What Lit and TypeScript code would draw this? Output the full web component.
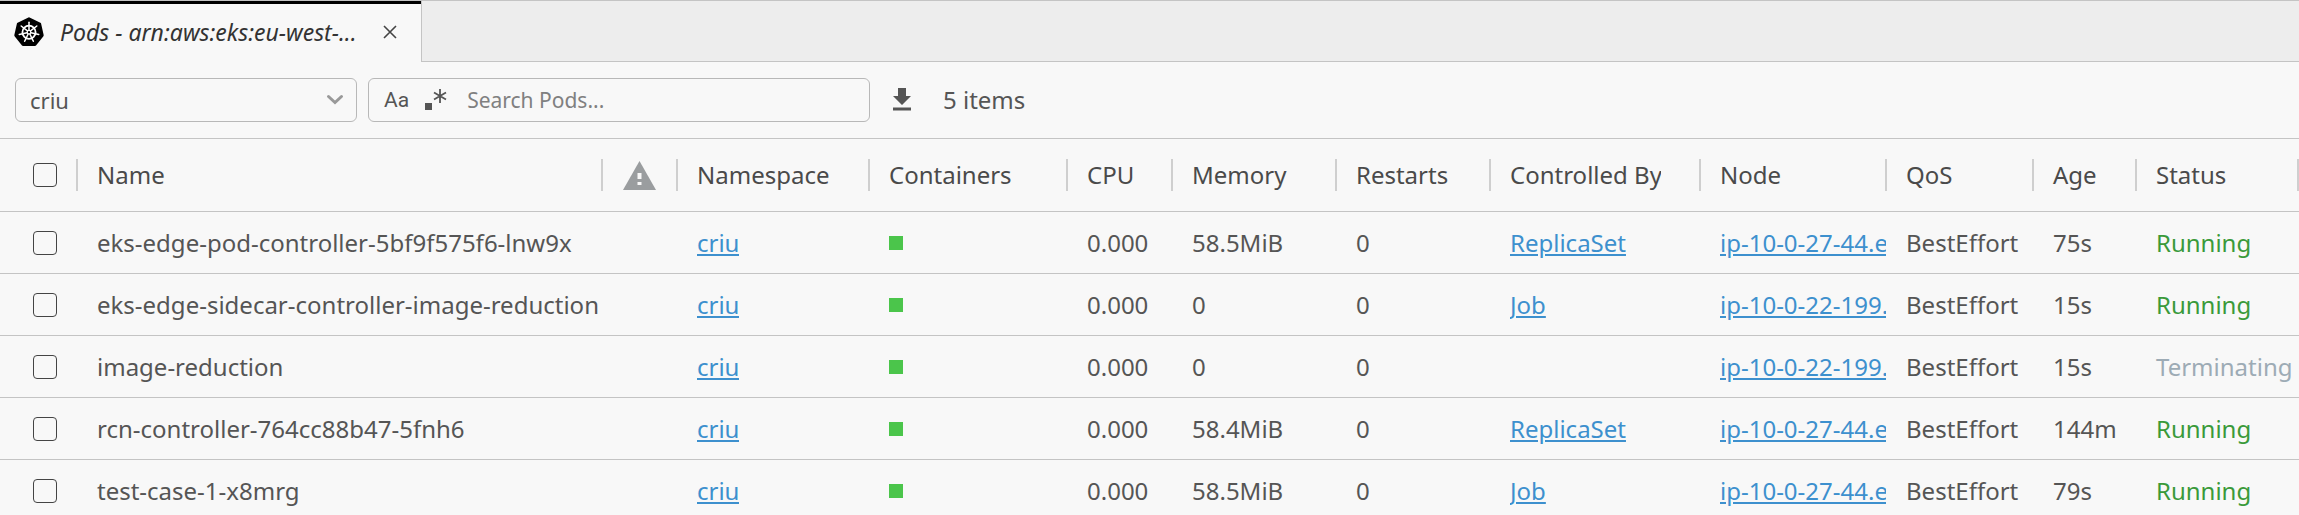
import { LitElement, html, css, svg } from "lit";
import { customElement, state } from "lit/decorators.js";

interface Pod {
  name: string;
  memory: string;
  owner: string;
  node: string;
  age: string;
  status: "Running" | "Terminating";
}

const PODS: Pod[] = [
  { name: "eks-edge-pod-controller-5bf9f575f6-lnw9x", memory: "58.5MiB", owner: "ReplicaSet", node: "ip-10-0-27-44.eu", age: "75s", status: "Running" },
  { name: "eks-edge-sidecar-controller-image-reduction", memory: "0", owner: "Job", node: "ip-10-0-22-199.eu", age: "15s", status: "Running" },
  { name: "image-reduction", memory: "0", owner: "", node: "ip-10-0-22-199.eu", age: "15s", status: "Terminating" },
  { name: "rcn-controller-764cc88b47-5fnh6", memory: "58.4MiB", owner: "ReplicaSet", node: "ip-10-0-27-44.eu", age: "144m", status: "Running" },
  { name: "test-case-1-x8mrg", memory: "58.5MiB", owner: "Job", node: "ip-10-0-27-44.eu", age: "79s", status: "Running" },
];

const SPOKES = [0, 1, 2, 3, 4, 5, 6].map((i) => (i * 360) / 7);

@customElement("app-root")
export class AppRoot extends LitElement {
  @state() private selected = new Set<string>();

  static styles = css`
    :host {
      display: block;
      height: 100vh;
      overflow: hidden;
      background: #f8f8f8;
      color: #555;
      font-family: "Noto Sans", sans-serif;
      font-size: 24px;
      line-height: 32px;
    }
    * {
      box-sizing: border-box;
    }
    .tabs {
      display: flex;
      height: 62px;
      background: #ededed;
      border-top: 1px solid #c4c4c4;
    }
    .tab {
      display: flex;
      align-items: center;
      width: 421px;
      padding-left: 14px;
      padding-bottom: 2px;
      background: #f8f8f8;
      border-top: 3px solid #000;
      color: #333;
      font-size: 23px;
      font-style: italic;
    }
    .tab-title {
      margin-left: 16px;
      white-space: nowrap;
    }
    .wheel {
      width: 30px;
      height: 30px;
      flex: none;
    }
    .close {
      display: flex;
      margin-left: 22px;
      padding: 4px;
      border: 0;
      background: none;
      color: #444;
    }
    .tabs-rest {
      flex: 1;
      border-left: 1px solid #c4c4c4;
      border-bottom: 1px solid #c4c4c4;
    }
    .toolbar {
      display: flex;
      align-items: center;
      height: 77px;
      padding: 0 15px;
      border-bottom: 1px solid #c4c4c4;
    }
    .select {
      display: grid;
      align-items: center;
      width: 342px;
    }
    .select > * {
      grid-area: 1 / 1;
    }
    .select select {
      appearance: none;
      width: 100%;
      height: 44px;
      padding: 0 14px;
      border: 1px solid #b8b8b8;
      border-radius: 6px;
      background: transparent;
      color: #555;
      font: inherit;
      font-size: 22px;
    }
    .chevron {
      justify-self: end;
      margin-right: 13px;
      pointer-events: none;
    }
    .search {
      display: flex;
      align-items: center;
      width: 502px;
      height: 44px;
      margin-left: 11px;
      padding: 0 15px;
      border: 1px solid #b8b8b8;
      border-radius: 6px;
    }
    .search button,
    .download {
      display: flex;
      padding: 0;
      border: 0;
      background: none;
      color: #555;
      font: inherit;
    }
    .search .case {
      font-family: Roboto, sans-serif;
      font-size: 21px;
    }
    .search .regex {
      margin-left: 16px;
    }
    .search input {
      flex: 1;
      min-width: 0;
      margin-left: 20px;
      padding: 0;
      border: 0;
      outline: 0;
      background: transparent;
      color: #555;
      font: inherit;
      font-size: 21px;
    }
    .search input::placeholder {
      color: #808080;
      opacity: 1;
    }
    .download {
      margin-left: 23px;
    }
    .count {
      margin-left: 32px;
    }
    table {
      width: 100%;
      table-layout: fixed;
      border-collapse: separate;
      border-spacing: 0;
    }
    .c-check { width: 78px; }
    .c-warn { width: 75px; }
    .c-ns { width: 192px; }
    .c-cont { width: 198px; }
    .c-cpu { width: 105px; }
    .c-mem { width: 164px; }
    .c-rest { width: 154px; }
    .c-by { width: 210px; }
    .c-node { width: 186px; }
    .c-qos { width: 147px; }
    .c-age { width: 103px; }
    .c-status { width: 162px; }
    th,
    td {
      padding: 0 0 0 19px;
      border-bottom: 1px solid #c4c4c4;
      font-weight: 400;
      text-align: left;
      white-space: nowrap;
      overflow: hidden;
    }
    th {
      height: 73px;
      padding: 0;
      color: #4a4a4a;
    }
    td {
      height: 62px;
    }
    .head {
      display: flex;
      align-items: center;
      height: 32px;
      padding-left: 19px;
      border-right: 2px solid #cfcfcf;
    }
    .head.wide {
      padding-right: 38px;
    }
    .head.wide span {
      overflow: hidden;
    }
    .head.check {
      padding-left: 33px;
    }
    .head.warn {
      justify-content: center;
      padding: 0;
    }
    .check-cell {
      padding-left: 33px;
    }
    .node-cell {
      padding-right: 1px;
    }
    .box {
      display: block;
      appearance: none;
      width: 24px;
      height: 24px;
      margin: 0;
      border: 1px solid #444;
      border-radius: 4px;
      background: transparent;
    }
    .box:checked {
      background: #3d90ce;
    }
    a {
      display: inline-block;
      max-width: 100%;
      overflow: hidden;
      vertical-align: top;
      color: #3d90ce;
      text-decoration: underline;
    }
    .brick {
      display: block;
      width: 14px;
      height: 14px;
      background: #4bc54b;
    }
    .running {
      color: #3a9a3a;
    }
    .terminating {
      color: #9dabb5;
    }
    svg {
      display: block;
    }
  `;

  private toggle(name: string) {
    const next = new Set(this.selected);
    next.has(name) ? next.delete(name) : next.add(name);
    this.selected = next;
  }

  private toggleAll() {
    this.selected = this.selected.size === PODS.length ? new Set() : new Set(PODS.map((p) => p.name));
  }

  private wheel() {
    return html`<svg class="wheel" viewBox="0 0 30 30" aria-hidden="true">
      <path d="M15 1.6 25.8 6.8 28.4 18.4 21 27.6H9L1.6 18.4 4.2 6.8Z" fill="#000" stroke="#000" stroke-width="2.6" stroke-linejoin="round" />
      <g fill="none" stroke="#fff" transform="translate(15 15.2)">
        <circle r="6.6" stroke-width="1.8" />
        ${SPOKES.map((a) => svg`<path d="M0-2V-10" stroke-width="1.5" stroke-linecap="round" transform=${`rotate(${a})`} />`)}
        <circle r="1.8" stroke-width="1.2" />
      </g>
    </svg>`;
  }

  private row(p: Pod) {
    return html`<tr>
      <td class="check-cell">
        <input class="box" type="checkbox" aria-label=${p.name} .checked=${this.selected.has(p.name)} @change=${() => this.toggle(p.name)} />
      </td>
      <td>${p.name}</td>
      <td></td>
      <td><a href="#criu">criu</a></td>
      <td><span class="brick"></span></td>
      <td>0.000</td>
      <td>${p.memory}</td>
      <td>0</td>
      <td>${p.owner ? html`<a href="#owner">${p.owner}</a>` : ""}</td>
      <td class="node-cell"><a href="#node">${p.node}</a></td>
      <td>BestEffort</td>
      <td>${p.age}</td>
      <td class=${p.status.toLowerCase()}>${p.status}</td>
    </tr>`;
  }

  render() {
    const head = (t: string, cls = "") => html`<th scope="col"><div class="head ${cls}"><span>${t}</span></div></th>`;
    return html`
      <div class="tabs">
        <div class="tab">
          ${this.wheel()}
          <span class="tab-title">Pods - arn:aws:eks:eu-west-...</span>
          <button class="close" aria-label="Close tab">
            <svg width="14" height="14" viewBox="0 0 14 14" fill="none" stroke="currentColor" stroke-width="1.6"><path d="M1 1 13 13M13 1 1 13" /></svg>
          </button>
        </div>
        <div class="tabs-rest"></div>
      </div>
      <div class="toolbar">
        <div class="select">
          <select aria-label="Namespace"><option>criu</option></select>
          <svg class="chevron" width="18" height="12" viewBox="0 0 18 12" fill="none" stroke="#999" stroke-width="3" stroke-linecap="round"><path d="M2.500 2.500 9 8.500 15.500 2.500" /></svg>
        </div>
        <div class="search">
          <button class="case" aria-label="Match case">Aa</button>
          <button class="regex" aria-label="Use regular expression">
            <svg width="22" height="22" viewBox="0 0 22 22" fill="none" stroke="currentColor" stroke-width="1.8"><path d="M0 14h7v7H0Z" fill="currentColor" stroke="none" /><path d="M15 0V14M9 3.5 21 10.5M21 3.5 9 10.5" /></svg>
          </button>
          <input type="text" aria-label="Search Pods" placeholder="Search Pods..." />
        </div>
        <button class="download" aria-label="Download">
          <svg width="18" height="24" viewBox="0 0 18 24" fill="currentColor"><path d="M5 0h8v8h5L9 17 0 8H5ZM0 19.500h18v3H0Z" /></svg>
        </button>
        <span class="count">5 items</span>
      </div>
      <table>
        <colgroup>
          <col class="c-check" /><col /><col class="c-warn" /><col class="c-ns" /><col class="c-cont" /><col class="c-cpu" /><col class="c-mem" />
          <col class="c-rest" /><col class="c-by" /><col class="c-node" /><col class="c-qos" /><col class="c-age" /><col class="c-status" />
        </colgroup>
        <thead>
          <tr>
            <th scope="col"><div class="head check">
              <input class="box" type="checkbox" aria-label="Select all" .checked=${this.selected.size === PODS.length} @change=${this.toggleAll} />
            </div></th>
            ${head("Name")}
            <th scope="col" aria-label="Warnings"><div class="head warn">
              <svg width="33" height="29" viewBox="0 0 33 29"><path d="M16.500 0 33 29H0Z" fill="#9a9d9f" /><path d="M14.500 12h4v6h-4ZM14.500 21h4v3h-4Z" fill="#f8f8f8" /></svg>
            </div></th>
            ${head("Namespace")} ${head("Containers")} ${head("CPU")} ${head("Memory")} ${head("Restarts")}
            ${head("Controlled By", "wide")} ${head("Node")} ${head("QoS")} ${head("Age")} ${head("Status")}
          </tr>
        </thead>
        <tbody>
          ${PODS.map((p) => this.row(p))}
        </tbody>
      </table>
    `;
  }
}
